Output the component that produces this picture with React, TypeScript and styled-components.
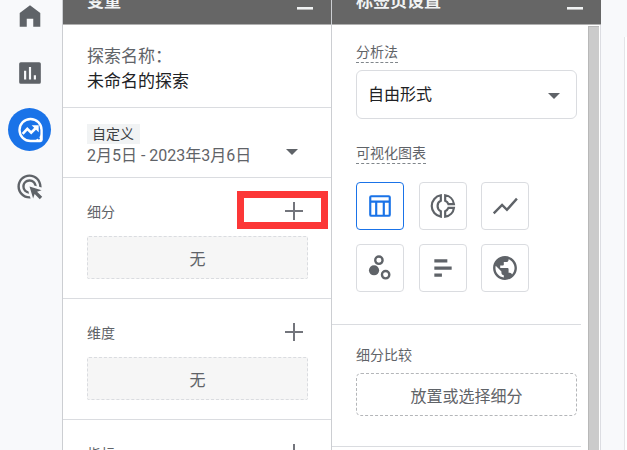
import React from "react";
import styled, { createGlobalStyle } from "styled-components";

const line = "#dadce0";
const muted = "#5f6368";

const GlobalStyle = createGlobalStyle`
  * { box-sizing: border-box; }
  html, body, #root { height: 100%; }
  body {
    margin: 0;
    background: #f8f9fb;
    color: ${muted};
    font-family: Roboto, "Noto Sans CJK SC", sans-serif;
    font-size: 14px;
    font-weight: 400;
    overflow: hidden;
  }
  button, select { font: inherit; color: inherit; margin: 0; padding: 0; border: 0; background: none; cursor: pointer; }
`;

const Page = styled.div`
  display: grid;
  grid-template-columns: 62px minmax(0, 269fr) minmax(0, 270fr) 26px;
  height: 100vh;
  overflow: hidden;
`;

const Rail = styled.nav`
  display: flex;
  flex-direction: column;
  align-items: center;
  padding-right: 3px;
  gap: 14px;
`;

const RailLink = styled.a<{ $active?: boolean }>`
  display: flex;
  flex: none;
  align-items: center;
  justify-content: center;
  width: 43px;
  height: 43px;
  border-radius: 50%;
  color: ${(p) => (p.$active ? "#fff" : muted)};
  background: ${(p) => (p.$active ? "#1a73e8" : "transparent")};
  &:first-child { margin-top: -6px; }
`;

const Panel = styled.section`
  display: flex;
  flex-direction: column;
  min-width: 0;
  min-height: 0;
  background: #fff;
  border-left: 1px solid #ccced2;
`;

const PanelHeader = styled.header`
  display: flex;
  flex: none;
  align-items: flex-end;
  justify-content: space-between;
  height: 25px;
  padding: 0 18px 0 24px;
  background: #666;
  border-bottom: 1px solid #b0b0b0;
  color: #f1f3f4;
  overflow: hidden;
`;

const PanelTitle = styled.h2`
  margin: 0 0 11px;
  font-size: 17px;
  line-height: 24px;
  font-weight: 700;
`;

const Minimize = styled.button`
  width: 16px;
  height: 3px;
  margin-bottom: 14px;
  background: #f1f3f4;
  border-bottom: 1px solid #b8b8b8;
`;

const NameBlock = styled.div`
  padding: 19px 24px 13px;
  border-bottom: 1px solid ${line};
  font-size: 17px;
  line-height: 25px;
`;

const NameValue = styled.div`
  color: #202124;
`;

const DateButton = styled.button`
  display: flex;
  align-items: flex-end;
  justify-content: space-between;
  width: 100%;
  padding: 16px 33px 10px 24px;
  border-bottom: 1px solid ${line};
  text-align: left;
  svg { margin-bottom: 12px; }
`;

const DateText = styled.span`
  display: flex;
  flex-direction: column;
  align-items: flex-start;
  font-size: 16px;
  line-height: 23px;
`;

const Tag = styled.span`
  padding: 0 6px 0 5px;
  background: #f1f3f4;
  color: #3c4043;
  font-size: 14px;
  line-height: 20px;
`;

const Section = styled.div`
  padding: 0 23px 19px 24px;
  border-bottom: 1px solid ${line};
`;

const SectionHead = styled.div`
  position: relative;
  display: flex;
  align-items: center;
  justify-content: space-between;
  height: 58px;
  padding: 10px 5px 0 0;
`;

const SectionTitle = styled.h3`
  margin: 0;
  font-size: 14px;
  line-height: 20px;
  font-weight: inherit;
`;

const AddButton = styled.button`
  display: flex;
  margin-bottom: 2px;
`;

const Highlight = styled.div`
  position: absolute;
  top: 13px;
  right: -20px;
  width: 91px;
  height: 38px;
  border: 7px solid #fc3737;
  pointer-events: none;
`;

const DropZone = styled.div<{ $open?: boolean }>`
  display: flex;
  align-items: center;
  justify-content: center;
  height: 43px;
  border: 1px dashed ${(p) => (p.$open ? "#b4b6b9" : line)};
  border-radius: ${(p) => (p.$open ? 5 : 2)}px;
  background: ${(p) => (p.$open ? "#fff" : "#f6f6f6")};
  font-size: 16px;
`;

const Scroller = styled.div`
  display: flex;
  flex: 1;
  min-height: 0;
  border-right: 1px solid #dcdde2;
`;

const ScrollContent = styled.div`
  flex: 1;
  min-width: 0;
  overflow: hidden;
  padding: 17px 7px 0 0;
`;

const ScrollTrack = styled.div`
  flex: none;
  width: 11px;
  margin: 1px 1px 0 0;
  background: #cbcbcb;
  border-left: 1px solid #b8b8b8;
  border-top: 1px solid #b8b8b8;
`;

const Group = styled.div`
  padding: 0 4px 24px 24px;
`;

const HintLabel = styled.label`
  display: table;
  border-bottom: 1px dashed #80868b;
  line-height: 20px;
`;

const SelectWrap = styled.div`
  position: relative;
  margin-top: 7px;
  svg { position: absolute; right: 17px; top: 23px; pointer-events: none; }
`;

const Select = styled.select`
  appearance: none;
  display: block;
  width: 100%;
  height: 49px;
  padding: 0 40px 0 11px;
  border: 1px solid ${line};
  border-radius: 6px;
  background: #fff;
  color: #202124;
  font-size: 16px;
`;

const ChartGrid = styled.div`
  display: grid;
  grid-template-columns: repeat(3, 48px);
  justify-content: space-between;
  width: 173px;
  row-gap: 14px;
  margin-top: 18px;
`;

const ChartButton = styled.button<{ $selected?: boolean }>`
  display: flex;
  align-items: center;
  justify-content: center;
  height: 48px;
  border: 1px solid ${(p) => (p.$selected ? "#1a73e8" : line)};
  border-radius: 4px;
  color: ${(p) => (p.$selected ? "#1a73e8" : muted)};
`;

const Compare = styled.div`
  margin-top: 8px;
  padding: 20px 4px 30px 24px;
  border-top: 1px solid ${line};
  border-bottom: 1px solid ${line};
`;

const CompareTitle = styled.h3`
  margin: 0 0 8px;
  font-size: 14px;
  line-height: 20px;
  font-weight: inherit;
`;

const Canvas = styled.main`
  display: flex;
  flex-direction: column;
  align-items: flex-end;
  padding-top: 37px;
`;

const Sheet = styled.div`
  flex: 1;
  width: 3px;
  background: #fff;
  border-left: 1px solid #e4e5e8;
`;

const Icon = ({ size = 26, children }: { size?: number; children: React.ReactNode }) => (
  <svg width={size} height={size} viewBox="0 0 24 24" fill="currentColor" aria-hidden="true">
    {children}
  </svg>
);

const Caret = () => (
  <svg width="12" height="6" viewBox="0 0 12 6" fill="currentColor" aria-hidden="true">
    <path d="M0 0h12L6 6z" />
  </svg>
);

const Plus = () => (
  <svg width="18" height="18" viewBox="0 0 18 18" fill="none" stroke="#73757c" strokeWidth="2" aria-hidden="true">
    <path d="M9 0v18M0 9h18" />
  </svg>
);

const charts = [
  {
    name: "表格",
    icon: <path fillRule="evenodd" d="M4 2h16a2 2 0 0 1 2 2v16a2 2 0 0 1-2 2H4a2 2 0 0 1-2-2V4a2 2 0 0 1 2-2zm0 2v3h16V4zm0 5v11h3.500V9zm5.500 0v11h5V9zm7 0v11H20V9z" />,
  },
  {
    name: "环形图",
    icon: (
      <g fill="none" stroke="currentColor" strokeWidth="2">
        <path d="M10 2.100C5.200 2.900 1.600 7 1.600 12S5.200 21.100 10 21.900V16.800C8 16 7 14.200 7 12S8 8 10 7.200z" />
        <path d="M14 2.100C18.300 2.700 21.600 6 22.100 10.200H17C16.400 8.700 15.500 7.800 14 7.200z" />
        <path d="M14 21.900C18.300 21.300 21.600 18 22.100 13.800H17C16.400 15.300 15.500 16.200 14 16.800z" />
      </g>
    ),
  },
  {
    name: "折线图",
    icon: <path fill="none" stroke="currentColor" strokeWidth="2.200" d="M1.600 18.800 9.300 11l4.500 4.500L23 5.200" />,
  },
  {
    name: "散点图",
    icon: (
      <>
        <circle cx="6.500" cy="14.100" r="4.700" />
        <g fill="none" stroke="currentColor" strokeWidth="2.200">
          <circle cx="11" cy="4.800" r="3.400" />
          <circle cx="17.200" cy="18.200" r="3.400" />
        </g>
      </>
    ),
  },
  { name: "条形图", icon: <path d="M4 4h12v3H4zM4 10.500h16v3H4zM4 17h7v3H4z" /> },
  {
    name: "地图",
    icon: <path d="M12 1C5.930 1 1 5.930 1 12s4.930 11 11 11 11-4.930 11-11S18.070 1 12 1zm-1.100 19.720C6.560 20.180 3.200 16.480 3.200 12c0-.680.090-1.330.230-1.970L8.700 15.300v1.100c0 1.210.990 2.200 2.200 2.200zm7.590-2.790A2.180 2.180 0 0 0 16.400 16.400h-1.100v-3.300c0-.610-.490-1.100-1.100-1.100H7.600V9.800h2.200c.610 0 1.100-.490 1.100-1.100V6.500h2.200c1.210 0 2.200-.990 2.200-2.200v-.450c3.220 1.310 5.500 4.470 5.500 8.150 0 2.290-.880 4.370-2.310 5.930z" />,
  },
];

function Header({ title }: { title: string }) {
  return (
    <PanelHeader>
      <PanelTitle>{title}</PanelTitle>
      <Minimize aria-label={`收起${title}`} />
    </PanelHeader>
  );
}

function VariableSection({ title, highlighted }: { title: string; highlighted?: boolean }) {
  return (
    <Section>
      <SectionHead>
        <SectionTitle>{title}</SectionTitle>
        <AddButton aria-label={`添加${title}`}>
          <Plus />
        </AddButton>
        {highlighted && <Highlight />}
      </SectionHead>
      <DropZone>无</DropZone>
    </Section>
  );
}

export default function App() {
  return (
    <>
      <GlobalStyle />
      <Page>
        <Rail>
          <RailLink href="#home" aria-label="首页">
            <Icon><path d="M2.500 9.200 12 2l9.500 7.200V22H15v-7.500H9V22H2.500z" /></Icon>
          </RailLink>
          <RailLink href="#reports" aria-label="报告">
            <Icon>
              <path fillRule="evenodd" d="M3.500 2h17A1.500 1.500 0 0 1 22 3.500v17a1.500 1.500 0 0 1-1.500 1.500h-17A1.500 1.500 0 0 1 2 20.500v-17A1.500 1.500 0 0 1 3.500 2zM6.500 10v8h2v-8zm4.500-3.500V18h2V6.500zm4.500 7.500v4h2v-4z" />
            </Icon>
          </RailLink>
          <RailLink href="#explore" aria-label="探索" $active>
            <Icon>
              <g fill="none" stroke="currentColor">
                <path strokeWidth="2.200" strokeLinejoin="round" d="M12.500 1.800A10.200 10.200 0 1 0 12.500 22.200H21.500a1.200 1.200 0 0 0 1.200-1.200V12A10.200 10.200 0 0 0 12.500 1.800z" />
                <path strokeWidth="2.400" d="M5.200 15.500 9.500 11l3.600 3.500 5.200-5.300" />
              </g>
              <path d="M13.500 7.500H20V14z" />
              <path d="M22.500 14.500v7.500H15c3.800-.8 6.600-3.600 7.500-7.500z" />
              <circle cx="20.200" cy="19.800" r="1" fill="#1a73e8" />
            </Icon>
          </RailLink>
          <RailLink href="#advertising" aria-label="广告">
            <Icon size={29}>
              <path d="M11.710 17.990A5.993 5.993 0 0 1 6 12c0-3.310 2.690-6 6-6 3.220 0 5.840 2.530 5.990 5.710l-2.100-.630a3.999 3.999 0 1 0-4.810 4.810zM22 12c0 .300-.010.600-.040.900l-1.970-.590c.010-.100.010-.210.010-.310 0-4.420-3.580-8-8-8s-8 3.580-8 8 3.580 8 8 8c.100 0 .210 0 .310-.010l.590 1.970c-.300.030-.600.040-.900.040-5.520 0-10-4.480-10-10S6.480 2 12 2s10 4.480 10 10zm-3.770 4.260L22 15l-10-3 3 10 1.260-3.770 4.270 4.270 1.980-1.980z" />
            </Icon>
          </RailLink>
        </Rail>

        <Panel>
          <Header title="变量" />
          <NameBlock>
            <div>探索名称：</div>
            <NameValue>未命名的探索</NameValue>
          </NameBlock>
          <DateButton>
            <DateText>
              <Tag>自定义</Tag>
              2月5日 - 2023年3月6日
            </DateText>
            <Caret />
          </DateButton>
          <VariableSection title="细分" highlighted />
          <VariableSection title="维度" />
          <VariableSection title="指标" />
        </Panel>

        <Panel>
          <Header title="标签页设置" />
          <Scroller>
            <ScrollContent>
              <Group>
                <HintLabel htmlFor="technique">分析法</HintLabel>
                <SelectWrap>
                  <Select id="technique" defaultValue="free">
                    <option value="free">自由形式</option>
                  </Select>
                  <Caret />
                </SelectWrap>
              </Group>
              <Group>
                <HintLabel as="div" id="charts">可视化图表</HintLabel>
                <ChartGrid role="group" aria-labelledby="charts">
                  {charts.map((c, i) => (
                    <ChartButton key={c.name} aria-label={c.name} aria-pressed={i === 0} $selected={i === 0}>
                      <Icon>{c.icon}</Icon>
                    </ChartButton>
                  ))}
                </ChartGrid>
              </Group>
              <Compare>
                <CompareTitle>细分比较</CompareTitle>
                <DropZone $open>放置或选择细分</DropZone>
              </Compare>
            </ScrollContent>
            <ScrollTrack />
          </Scroller>
        </Panel>

        <Canvas>
          <Sheet />
        </Canvas>
      </Page>
    </>
  );
}
